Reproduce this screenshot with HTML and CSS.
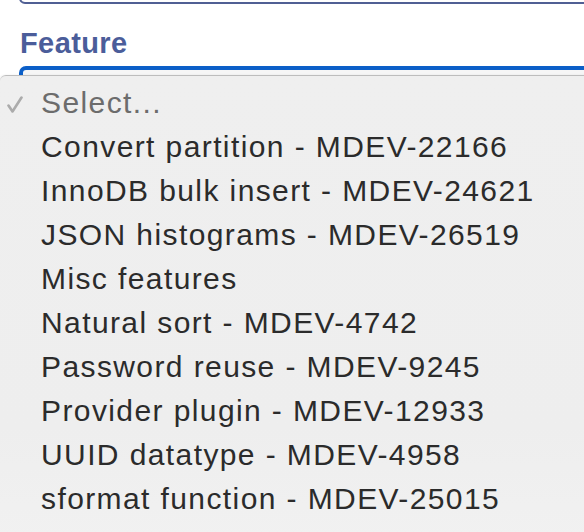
FILE: index.html
```html
<!DOCTYPE html>
<html>
<head>
<meta charset="utf-8">
<link rel="stylesheet" href="styles.css">
</head>
<body>
<div class="page">
  <div class="prev-input"></div>
  <label class="label">Feature</label>
  <div class="select"></div>
  <ul class="menu">
    <li class="opt placeholder"><svg class="check" width="16" height="17" viewBox="0 0 16 17"><path d="M1.5 9.5 L5.5 15.5 L14.5 1.5" fill="none" stroke="#ababab" stroke-width="2.6" stroke-linecap="round" stroke-linejoin="round"/></svg>Select...</li>
    <li class="opt">Convert partition - MDEV-22166</li>
    <li class="opt">InnoDB bulk insert - MDEV-24621</li>
    <li class="opt">JSON histograms - MDEV-26519</li>
    <li class="opt">Misc features</li>
    <li class="opt">Natural sort - MDEV-4742</li>
    <li class="opt">Password reuse - MDEV-9245</li>
    <li class="opt">Provider plugin - MDEV-12933</li>
    <li class="opt">UUID datatype - MDEV-4958</li>
    <li class="opt">sformat function - MDEV-25015</li>
  </ul>
</div>
</body>
</html>
```
FILE: styles.css
```css
html, body {
  margin: 0;
  padding: 0;
  background: #ffffff;
  overflow: hidden;
}
.page {
  position: relative;
  width: 584px;
  height: 532px;
  overflow: hidden;
  font-family: "Liberation Sans", Arial, sans-serif;
}
.prev-input {
  height: 12px;
  margin-top: -12px;
  margin-left: 19px;
  margin-right: -20px;
  border: 2px solid #505f94;
  border-radius: 6px;
}
.label {
  display: block;
  margin: 0 0 0 20px;
  padding-top: 22px;
  font-size: 29px;
  line-height: 34px;
  font-weight: bold;
  letter-spacing: 0.4px;
  color: #4b5d9a;
}
.select {
  margin-top: 6px;
  margin-left: 19px;
  margin-right: -20px;
  height: 30px;
  border: 4px solid #0b5fc8;
  border-radius: 7px;
  background: #f6f6f6;
}
.menu {
  position: absolute;
  left: 0;
  top: 75px;
  width: 600px;
  height: 470px;
  margin: 0;
  padding: 5px 0 0 0;
  list-style: none;
  background: linear-gradient(180deg, #efefef 0%, #eeeeee 75%, #f1f1f1 100%);
  border-top: 1px solid #bdbdbd;
  border-radius: 6px 0 0 8px;
  box-sizing: border-box;
  box-shadow: -1px 0 2px rgba(0,0,0,0.08);
}
.opt {
  position: relative;
  padding-left: 41px;
  font-size: 30px;
  line-height: 44px;
  height: 44px;
  letter-spacing: 1.4px;
  color: #2b2b2b;
  white-space: nowrap;
}
.placeholder {
  color: #6c6c6c;
}
.check {
  position: absolute;
  left: 7px;
  top: 15px;
}
```
